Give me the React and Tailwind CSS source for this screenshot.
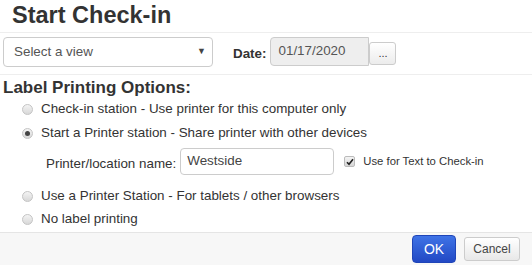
export default function App() {
  const Radio = ({ checked, label, tall }) => (
    <label className={`flex items-center pl-[22px] ${tall ? "h-[24px]" : "h-[23px]"}`}>
      <span className="flex h-[11px] w-[11px] items-center justify-center rounded-full border border-[#c4c4c4] bg-gradient-to-b from-[#f4f4f4] to-[#d8d8d8]">
        {checked && <span className="h-[5px] w-[5px] rounded-full bg-[#444]" />}
      </span>
      <span className="ml-[8px] text-[13.4px] text-[#333]">{label}</span>
    </label>
  );

  return (
    <div
      className="relative h-[265px] w-[532px] overflow-hidden bg-white text-[#333]"
      style={{ fontFamily: '"Liberation Sans", Arial, sans-serif' }}
    >
      {/* title */}
      <div className="h-[33px] border-b border-[#eee] pl-[12px] pt-[1px] text-[23.5px] font-bold leading-[29px] text-[#333]">
        Start Check-in
      </div>

      {/* view + date */}
      <div className="flex h-[42px] items-start border-b border-[#eee] pl-[3px] pt-[4px]">
        <div className="flex h-[30px] w-[210px] items-center justify-between rounded-[4px] border border-[#ccc] bg-white pl-[10px] pr-[6px] text-[13.4px] text-[#555]">
          <span>Select a view</span>
          <span className="text-[9px] text-[#444]">▼</span>
        </div>
        <span className="ml-[20px] mt-[7px] text-[13.4px] font-bold">Date:</span>
        <div className="ml-[4px] flex h-[29px] w-[99px] items-center rounded-l-[4px] border border-[#ccc] bg-[#eee] pl-[7px] text-[13.4px] text-[#555]">
          01/17/2020
        </div>
        <div className="mt-[5px] flex h-[23px] w-[27px] items-center justify-center rounded-[3px] border border-[#ccc] bg-gradient-to-b from-white to-[#ececec] text-[11px] leading-none text-[#333]">
          ...
        </div>
      </div>

      {/* label options */}
      <div className="pl-[3px] pt-[4px] text-[17px] font-bold leading-[18px]">Label Printing Options:</div>
      <div>
        <Radio tall label="Check-in station - Use printer for this computer only" />
        <Radio tall checked label="Start a Printer station - Share printer with other devices" />
        <div className="mb-[7px] flex h-[33px] items-center pl-[46px]">
          <span className="pt-[6px] text-[13.4px]">Printer/location name:</span>
          <div className="ml-[4px] flex h-[27px] w-[154px] items-center rounded-[4px] border border-[#ccc] pl-[6px] text-[13.4px] text-[#444]">
            Westside
          </div>
          <span className="ml-[10px] flex h-[11px] w-[11px] items-center justify-center rounded-[2px] border border-[#bbb] bg-gradient-to-b from-[#f4f4f4] to-[#d6d6d6]">
            <svg width="8" height="8" viewBox="0 0 8 8">
              <path d="M1 4.2 L3 6.3 L7 1.2" fill="none" stroke="#222" strokeWidth="1.6" />
            </svg>
          </span>
          <span className="ml-[8px] text-[11.3px] text-[#333]">Use for Text to Check-in</span>
        </div>
        <Radio label="Use a Printer Station - For tablets / other browsers" />
        <Radio label="No label printing" />
      </div>

      {/* footer */}
      <div className="absolute bottom-0 left-0 right-0 flex h-[33px] items-center justify-end border-t border-[#e5e5e5] bg-[#f7f7f7] pr-[12px]">
        <button className="flex h-[28px] w-[44px] items-center justify-center rounded-[4px] border border-[#1f45b8] bg-gradient-to-b from-[#3f73e6] to-[#2248c4] text-[14px] text-white">
          OK
        </button>
        <button className="ml-[8px] flex h-[24px] w-[56px] items-center justify-center rounded-[3px] border border-[#ccc] bg-gradient-to-b from-white to-[#e8e8e8] text-[12px] text-[#444]">
          Cancel
        </button>
      </div>
    </div>
  );
}
